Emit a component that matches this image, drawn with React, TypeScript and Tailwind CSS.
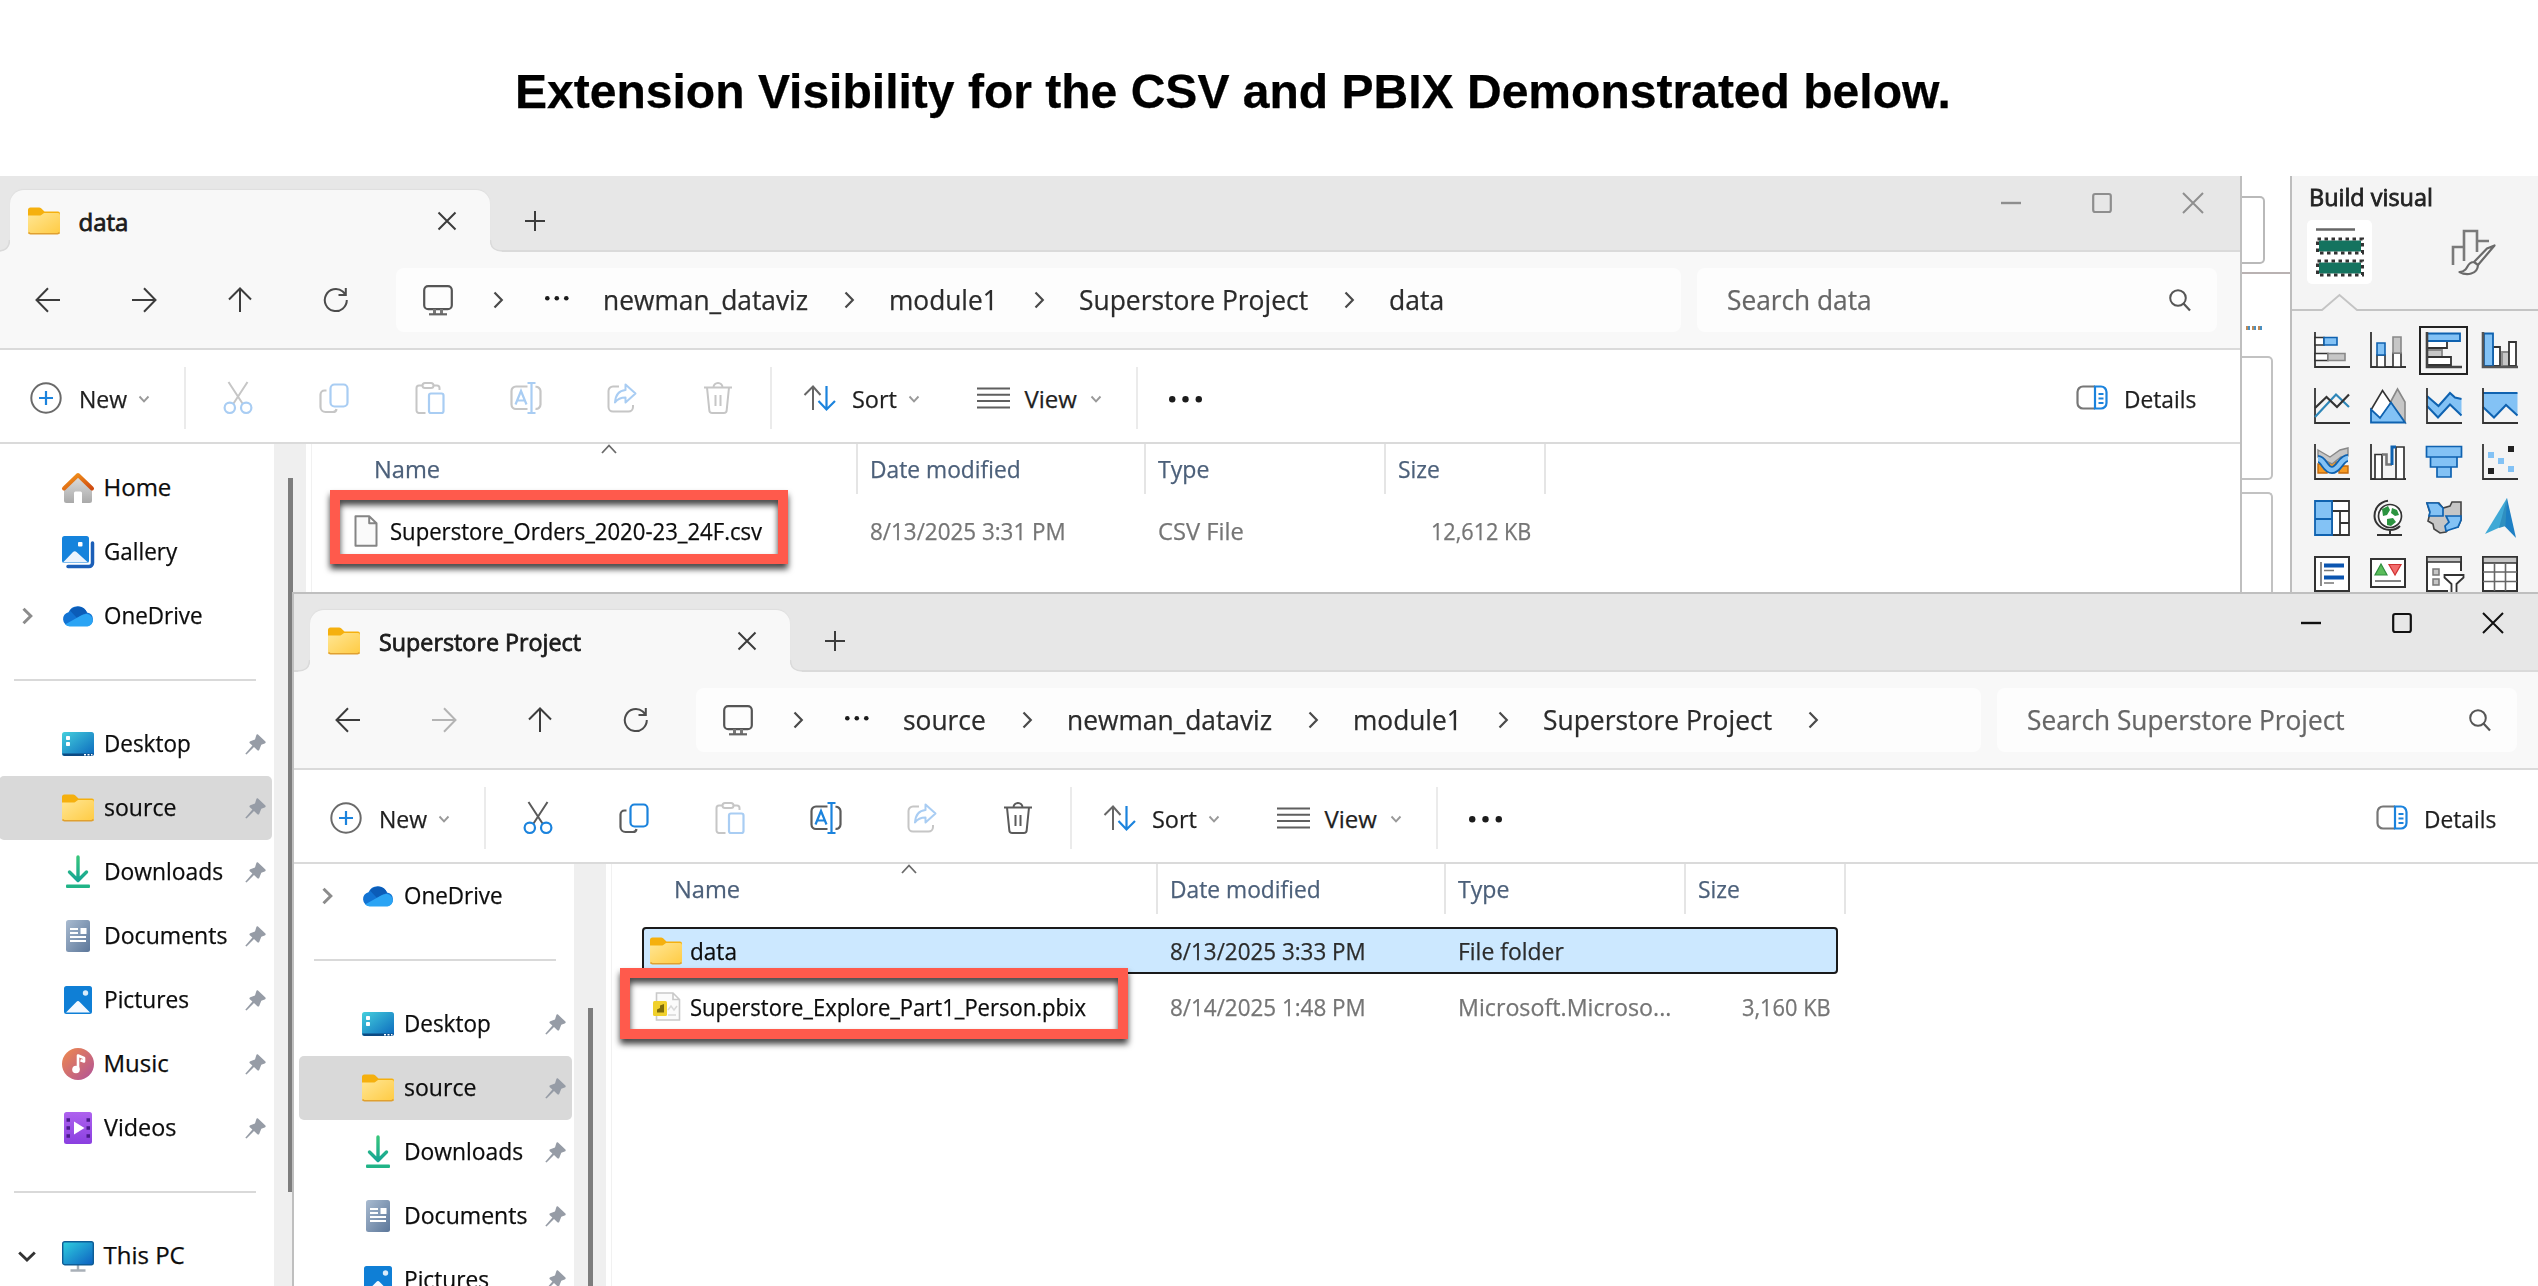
import { useLayoutEffect, useRef, useState } from "react";
import type { ReactNode } from "react";

/* Single line of text set to an exact advance width. */
function Fit({ w, children, className = "" }: { w: number; children: string; className?: string }) {
  const ref = useRef<HTMLSpanElement>(null);
  const [k, setK] = useState(1);
  useLayoutEffect(() => {
    if (ref.current) setK((w + 2) / ref.current.offsetWidth);
  }, [w, children]);
  return (
    <span className={`inline-block shrink-0 whitespace-nowrap ${className}`} style={{ width: w }}>
      <span ref={ref} className="-ml-[1.5px] inline-block origin-left" style={{ transform: `scaleX(${k})` }}>
        {children}
      </span>
    </span>
  );
}

type SvgProps = { w: number; h: number; children: ReactNode; className?: string };
function Svg({ w, h, children, className = "" }: SvgProps) {
  return (
    <svg width={w} height={h} viewBox={`0 0 ${w} ${h}`} fill="none" className={`shrink-0 overflow-visible ${className}`}>
      {children}
    </svg>
  );
}

/* ---------- explorer icons ---------- */

const Folder = () => (
  <Svg w={32} h={28}>
    <defs>
      <linearGradient id="fold" x1="0" y1="0" x2="1" y2="1">
        <stop offset="0" stopColor="#ffe694" />
        <stop offset="1" stopColor="#ffcb43" />
      </linearGradient>
    </defs>
    <path d="M0 10V3a2.5 2.5 0 0 1 2.5-2.5h8.6a3 3 0 0 1 2 .8L16.500 4.500H30a2 2 0 0 1 2 2V12H0Z" fill="#f5b00e" />
    <path d="M0 8.500h11.500a3 3 0 0 0 1.800-.6L16 6h14a2 2 0 0 1 2 2v16.500a2.500 2.500 0 0 1-2.500 2.500h-27A2.500 2.500 0 0 1 0 24.500Z" fill="url(#fold)" />
    <path d="M.5 25.500a2.500 2.500 0 0 0 2 1.200h27a2.500 2.500 0 0 0 2-1.200" stroke="#e0a030" strokeWidth="1.500" />
  </Svg>
);

const HomeIcon = () => (
  <Svg w={32} h={32}>
    <defs>
      <linearGradient id="hm" x1="0" y1="0" x2="0" y2="1">
        <stop offset="0" stopColor="#e2e2e2" />
        <stop offset="1" stopColor="#a9a9a9" />
      </linearGradient>
      <linearGradient id="rf" x1="0" y1="0" x2="1" y2="1">
        <stop offset="0" stopColor="#f59a1d" />
        <stop offset="1" stopColor="#cf4a10" />
      </linearGradient>
    </defs>
    <path d="M2 14 16 2l14 12v14.500a2.500 2.500 0 0 1-2.500 2.500H20v-10a1.500 1.500 0 0 0-1.500-1.500h-5A1.500 1.500 0 0 0 12 21v10H4.500A2.500 2.500 0 0 1 2 28.500Z" fill="url(#hm)" />
    <path d="M2 16.500 16 3l14 13.500" stroke="url(#rf)" strokeWidth="4" strokeLinecap="round" strokeLinejoin="round" />
  </Svg>
);

const GalleryIcon = () => (
  <Svg w={32} h={32}>
    <path d="M6 30.500h21a3.500 3.500 0 0 0 3.500-3.500V7" stroke="#1b5fb8" strokeWidth="3.500" strokeLinecap="round" />
    <rect x="0" y="0" width="27" height="27" rx="2.500" fill="#1583dc" />
    <path d="M1 26.500 11 16a2.500 2.500 0 0 1 3.500 0L26 26.500Z" fill="#eaf3fd" />
    <rect x="16" y="6" width="4.500" height="4.500" rx="1" fill="#fff" />
  </Svg>
);

const CloudIcon = () => (
  <Svg w={32} h={22}>
    <path d="M7.500 21a7 7 0 0 1-1-13.800A10 10 0 0 1 25 7.600a6.800 6.800 0 0 1 .5 13.400Z" fill="#1273d3" />
    <path d="M8 5.500A10 10 0 0 1 25 7.500L15 13Z" fill="#0b5cb8" />
    <path d="M3 19.500 19 10.500a8 8 0 0 1 6-1.500 6.300 6.300 0 0 1 .5 12.500h-18a8 8 0 0 1-4.500-2Z" fill="#2ba4f4" />
  </Svg>
);

const DesktopIcon = () => (
  <Svg w={32} h={24}>
    <defs>
      <linearGradient id="dk" x1="0" y1="0" x2="1" y2="1">
        <stop offset="0" stopColor="#44cfdd" />
        <stop offset="1" stopColor="#0b68bd" />
      </linearGradient>
    </defs>
    <rect width="32" height="24" rx="2.500" fill="url(#dk)" />
    <path d="M.3 21.500h31.400a2.500 2.500 0 0 1-2.200 2.500h-27a2.500 2.500 0 0 1-2.200-2.500Z" fill="#0c4a83" />
    <rect x="4" y="4" width="4" height="4" rx=".8" fill="#fff" />
    <rect x="4" y="10" width="4" height="4" rx=".8" fill="#fff" />
    <path d="M22 22.800h2M25.500 22.800h2M29 22.800h1.500" stroke="#fff" strokeWidth="1.600" />
  </Svg>
);

const DownloadIcon = () => (
  <Svg w={32} h={32}>
    <defs>
      <linearGradient id="dl" gradientUnits="userSpaceOnUse" x1="0" y1="0" x2="0" y2="32">
        <stop offset="0" stopColor="#37c67a" />
        <stop offset="1" stopColor="#0c9c9c" />
      </linearGradient>
    </defs>
    <path d="M16.010 1V24M7.500 16l8.500 8.500 8.500-8.500" stroke="url(#dl)" strokeWidth="3.400" strokeLinecap="round" strokeLinejoin="round" />
    <rect x="4" y="28.500" width="24" height="3.500" rx="1" fill="#20b487" />
  </Svg>
);

const DocumentIcon = () => (
  <Svg w={32} h={32}>
    <defs>
      <linearGradient id="dc" x1="0" y1="0" x2="1" y2="1">
        <stop offset="0" stopColor="#a9bbd0" />
        <stop offset="1" stopColor="#5b7699" />
      </linearGradient>
    </defs>
    <rect x="4" y="0" width="24" height="32" rx="2.500" fill="url(#dc)" />
    <path d="M8 9h8M8 13h8M8 17h16M8 21h16" stroke="#fff" strokeWidth="2" />
    <rect x="18.500" y="8" width="6" height="6" fill="#fff" />
  </Svg>
);

const PictureIcon = () => (
  <Svg w={32} h={28}>
    <rect x="2" y="0" width="28" height="28" rx="2.500" fill="#0f7fd6" />
    <path d="M4 26.500 14.300 16a2.300 2.300 0 0 1 3.400 0L28 26.500Z" fill="#f4f9ff" />
    <circle cx="23.500" cy="7" r="2.700" fill="#d9ecfb" />
  </Svg>
);

const MusicIcon = () => (
  <Svg w={32} h={32}>
    <defs>
      <linearGradient id="mu" x1="0" y1="0" x2="1" y2="1">
        <stop offset="0" stopColor="#f08a4b" />
        <stop offset="1" stopColor="#b0529a" />
      </linearGradient>
    </defs>
    <circle cx="16" cy="16" r="16" fill="url(#mu)" />
    <circle cx="14" cy="21.500" r="3.800" fill="#fff" />
    <path d="M16 22V7.500l6 2.500v3.500l-3.500-1.300" stroke="#fff" strokeWidth="2.600" strokeLinejoin="round" />
  </Svg>
);

const VideoIcon = () => (
  <Svg w={32} h={32}>
    <defs>
      <linearGradient id="vi" x1="0" y1="0" x2="0" y2="1">
        <stop offset="0" stopColor="#ae62ee" />
        <stop offset="1" stopColor="#8a3fe0" />
      </linearGradient>
    </defs>
    <rect x="2" y="0" width="28" height="32" rx="2.500" fill="url(#vi)" />
    <path d="M4.500 8h3.500M4.500 16h3.500M4.500 24h3.500M24.500 8H28M24.500 16H28M24.500 24H28" stroke="#4a1a8c" strokeWidth="3.600" />
    <path d="M12 9.500 22.500 16 12 22.500Z" fill="#fff" />
  </Svg>
);

const PcIcon = () => (
  <Svg w={32} h={31}>
    <defs>
      <linearGradient id="pc" x1="0" y1="0" x2="1" y2="1">
        <stop offset="0" stopColor="#2fd0e0" />
        <stop offset="1" stopColor="#0d5fc0" />
      </linearGradient>
    </defs>
    <path d="M16 24v5M8.500 29.500h15" stroke="#a9b0b8" strokeWidth="2.400" />
    <rect x=".7" y=".7" width="30.600" height="23" rx="2" fill="url(#pc)" stroke="#0e5d96" strokeWidth="1.400" />
  </Svg>
);

const Pin = () => (
  <Svg w={21} h={21}>
    <path d="M13 .6 20.400 7.500c.6.700.3 1.700-.7 2l-3.400 1.200-2 5c-.3.900-1.200 1.100-1.900.5L9 13 1.500 20.500.3 19.800 7.400 11.600 4.800 9.200c-.7-.7-.4-1.600.5-1.900L10 5.400 11.200 1.500C11.500.4 12.300 0 13 .6Z" fill="#969ca6" />
  </Svg>
);

const FileIcon = () => (
  <Svg w={32} h={32}>
    <path d="M5.500 1.200h13.700l7.300 7V30.800H5.500ZM19.200 1.200v7h7.300" stroke="#858585" strokeWidth="2" fill="#fafafa" strokeLinejoin="round" />
  </Svg>
);

const PbixIcon = () => (
  <Svg w={32} h={30}>
    <path d="M6.500 1H23l6.500 6.500V28h-23ZM23 1v6.500h6.500" stroke="#c9c9c9" strokeWidth="1.600" fill="#fbfbfb" />
    <path d="M18 18l3-4 3 4 3-4M18 23h8" stroke="#d8d8d8" strokeWidth="1.500" />
    <rect x="3" y="9" width="14" height="15" rx="1.500" fill="#f0d02c" />
    <path d="M7 20.500v-3l3-1.500v-2.500l4-1.500v8.500Z" fill="#7d6a08" />
  </Svg>
);

const Chevron = ({ color = "#4a4a4a" }: { color?: string }) => (
  <Svg w={12} h={18}>
    <path d="M2.500 1.500 9.800 9l-7.300 7.500" stroke={color} strokeWidth="2.200" />
  </Svg>
);

const NavChevron = () => (
  <Svg w={12} h={18}>
    <path d="M1.500 1.800 8.800 9l-7.300 7.200" stroke="#8c8c8c" strokeWidth="3" />
  </Svg>
);

const Caret = () => (
  <Svg w={12} h={8}>
    <path d="M1.500 1.500 6 6.300l4.500-4.800" stroke="#999" strokeWidth="1.900" />
  </Svg>
);

const Back = ({ color = "#3c3c3c" }: { color?: string }) => (
  <Svg w={26} h={26}>
    <path d="M25 13H1.800M13 1.200 1.500 13 13 24.800" stroke={color} strokeWidth="2" />
  </Svg>
);

const Arrow = ({ color }: { color: string }) => (
  <Svg w={26} h={26}>
    <path d="M1 13h23.200M13 1.200 24.500 13 13 24.800" stroke={color} strokeWidth="2" />
  </Svg>
);

const Up = () => (
  <Svg w={26} h={26}>
    <path d="M13 25V1.800M2 12.500 13 1.500l11 11" stroke="#3c3c3c" strokeWidth="2" />
  </Svg>
);

const Refresh = () => (
  <Svg w={26} h={26}>
    <path d="M23.800 13A11 11 0 1 1 19.800 4.600L22.500 7.500M22.800 1v7H15.500" stroke="#4c4c4c" strokeWidth="2" />
  </Svg>
);

const Monitor = () => (
  <Svg w={30} h={31}>
    <rect x="1.200" y="1.200" width="27.600" height="23" rx="4" stroke="#555" strokeWidth="2.200" />
    <path d="M11.500 24v5M18.500 24v5" stroke="#777" strokeWidth="3" />
    <path d="M6 29.300h18" stroke="#666" strokeWidth="2.200" />
  </Svg>
);

const Magnifier = () => (
  <Svg w={22} h={22}>
    <circle cx="9" cy="9" r="7.800" stroke="#555" strokeWidth="2" />
    <path d="M14.500 14.500 21 21.500" stroke="#555" strokeWidth="2.200" />
  </Svg>
);

type Tone = { on: boolean };
const ink = (on: boolean) => (on ? "#5a5a5a" : "#c6c6c6");
const blue = (on: boolean) => (on ? "#1b83dd" : "#a9cdf3");

const Cut = ({ on }: Tone) => (
  <Svg w={30} h={32}>
    <path d="M5.500 0 19.500 21.500M24.500 0 10.500 21.500" stroke={ink(on)} strokeWidth="2" />
    <circle cx="6.800" cy="25.800" r="5.200" stroke={blue(on)} strokeWidth="2.200" />
    <circle cx="23.200" cy="25.800" r="5.200" stroke={blue(on)} strokeWidth="2.200" />
  </Svg>
);

const Copy = ({ on }: Tone) => (
  <Svg w={30} h={30}>
    <path d="M7.500 7.500H5.500A4 4 0 0 0 1.500 11.500V24a5 5 0 0 0 5 5H14a3.500 3.500 0 0 0 3.500-3" stroke={ink(on)} strokeWidth="2.200" />
    <rect x="11.500" y="1.500" width="17" height="22" rx="4" stroke={blue(on)} strokeWidth="2.200" />
  </Svg>
);

const Paste = ({ on }: Tone) => (
  <Svg w={30} h={32}>
    <path d="M8 3.500H4A2.500 2.500 0 0 0 1.500 6v22.500A2.500 2.500 0 0 0 4 31h6.500M18 3.500h4A2.500 2.500 0 0 1 24.500 6v2" stroke={ink(on)} strokeWidth="2" />
    <rect x="7.500" y="1" width="11" height="5" rx="2.500" stroke={ink(on)} strokeWidth="2" />
    <rect x="14" y="11.500" width="14.500" height="19.500" rx="2" stroke={blue(on)} strokeWidth="2.200" />
  </Svg>
);

const Rename = ({ on }: Tone) => (
  <Svg w={32} h={32}>
    <path d="M17.500 4.500H6A4.500 4.500 0 0 0 1.500 9v13.500A4.500 4.500 0 0 0 6 27h11.500M25.500 4.800A4.500 4.500 0 0 1 30.500 9v13.500a4.500 4.500 0 0 1-5 4.400" stroke={ink(on)} strokeWidth="2.200" />
    <path d="M5.500 22.500 11 9l5.500 13.500M7.500 18.500h7M21.500 1v30M17.500 1h8M17.500 31h8" stroke={blue(on)} strokeWidth="2.200" />
  </Svg>
);

const Share = ({ on }: Tone) => (
  <Svg w={30} h={30}>
    <path d="M12 3.500H6A4.500 4.500 0 0 0 1.500 8v16A4.500 4.500 0 0 0 6 28.500h15.500A4.500 4.500 0 0 0 26 24v-2" stroke={ink(on)} strokeWidth="2" />
    <path d="M18.500 1.500 28.500 10.500l-10 9V14.500c-5 0-8 1.500-10.500 5 .5-7 4-12 10.500-12.500Z" stroke={blue(on)} strokeWidth="2" strokeLinejoin="round" />
  </Svg>
);

const Trash = ({ on }: Tone) => (
  <Svg w={30} h={32}>
    <path d="M1 5.500h28M10.500 5.500a4.500 4.500 0 0 1 9 0M4 5.500l2.300 22.700A3 3 0 0 0 9.300 31h11.400a3 3 0 0 0 3-2.800L26 5.500M12.500 13v11M17.500 13v11" stroke={ink(on)} strokeWidth="2" />
  </Svg>
);

const NewIcon = () => (
  <Svg w={32} h={32}>
    <circle cx="16" cy="16" r="14.700" stroke="#6a6a6a" strokeWidth="2" />
    <path d="M16 9v14M9 16h14" stroke="#1b83dd" strokeWidth="2.200" />
  </Svg>
);

const SortIcon = () => (
  <Svg w={34} h={26}>
    <path d="M10 25V1.500M1.500 10 10 1.500l7.500 8.500" stroke="#666" strokeWidth="2" />
    <path d="M23.500 1v23.500M15.500 16l8 8.500 8.500-8.500" stroke="#1b83dd" strokeWidth="2.200" />
  </Svg>
);

const ViewIcon = () => (
  <Svg w={33} h={22}>
    <path d="M0 1.500h33M0 7.700h33M0 14h33M0 20.500h33" stroke="#5f5f5f" strokeWidth="2" />
  </Svg>
);

const DetailsIcon = () => (
  <Svg w={32} h={25}>
    <path d="M19 1.500H7A5.500 5.500 0 0 0 1.500 7v11A5.500 5.500 0 0 0 7 23.500h12" stroke="#777" strokeWidth="2.200" />
    <path d="M19 1.500h6A5.500 5.500 0 0 1 30.500 7v11a5.500 5.500 0 0 1-5.500 5.500h-6ZM22.500 9h5M22.500 13.500h5M22.500 18h5" stroke="#1b83dd" strokeWidth="2.200" />
  </Svg>
);

const Dots = ({ r, gap }: { r: number; gap: number }) => (
  <Svg w={gap * 2 + r * 2} h={r * 2}>
    <circle cx={r} cy={r} r={r} fill="#1c1c1c" />
    <circle cx={r + gap} cy={r} r={r} fill="#1c1c1c" />
    <circle cx={r + gap * 2} cy={r} r={r} fill="#1c1c1c" />
  </Svg>
);

/* ---------- navigation pane ---------- */

type NavItem = { label: string; w: number; icon: ReactNode; pin?: boolean; active?: boolean; chevron?: "right" | "down" } | null;

const oneDrive: NavItem = { label: "OneDrive", w: 97, icon: <CloudIcon />, chevron: "right" };
const pinned: NavItem[] = [
  { label: "Desktop", w: 85, icon: <DesktopIcon />, pin: true },
  { label: "source", w: 70, icon: <Folder />, pin: true, active: true },
  { label: "Downloads", w: 117, icon: <DownloadIcon />, pin: true },
  { label: "Documents", w: 121, icon: <DocumentIcon />, pin: true },
  { label: "Pictures", w: 83, icon: <PictureIcon />, pin: true },
  { label: "Music", w: 63, icon: <MusicIcon />, pin: true },
  { label: "Videos", w: 70, icon: <VideoIcon />, pin: true },
];

const fullNav: NavItem[] = [
  { label: "Home", w: 66, icon: <HomeIcon /> },
  { label: "Gallery", w: 71, icon: <GalleryIcon /> },
  oneDrive,
  null,
  ...pinned,
  null,
  { label: "This PC", w: 79, icon: <PcIcon />, chevron: "down" },
];

const scrolledNav: NavItem[] = [oneDrive, null, ...pinned.slice(0, 5)];

function NavPane({ items, className }: { items: NavItem[]; className: string }) {
  return (
    <nav className={`w-[280px] shrink-0 ${className}`}>
      {items.map((it, i) =>
        it === null ? (
          <div key={i} className="flex h-16 items-center pl-5">
            <div className="h-[2px] w-[242px] bg-[#d9d9d9]" />
          </div>
        ) : (
          <div key={i} className={`ml-[5px] flex h-16 w-[273px] items-center rounded-[5px] pr-[6px] ${it.active ? "bg-[#d9d9d9]" : ""}`}>
            <div className="mr-[5px] flex w-[58px] shrink-0 justify-center">
              {it.chevron === "right" && <NavChevron />}
              {it.chevron === "down" && (
                <Svg w={18} h={11} className="-ml-[2px]">
                  <path d="M1.200 1.500 9 9l7.800-7.500" stroke="#333" strokeWidth="2.900" />
                </Svg>
              )}
            </div>
            {it.icon}
            <Fit w={it.w} className="-mt-[2px] ml-[11px] text-[24px] text-[#0c0c0c]">{it.label}</Fit>
            {it.pin && <div className="ml-auto"><Pin /></div>}
          </div>
        ),
      )}
    </nav>
  );
}

/* ---------- explorer window ---------- */

type Crumb = [string, number];
type FileRow = {
  name: Crumb;
  icon: ReactNode;
  date: string;
  type: Crumb;
  size?: Crumb;
  selected?: boolean;
};

type WindowProps = {
  title: Crumb;
  crumbs: Crumb[];
  trailing?: boolean;
  search: Crumb;
  focused: boolean;
  nav: NavItem[];
  navClass: string;
  thumbClass: string;
  rows: FileRow[];
  className: string;
};

const Sep = ({ className }: { className: string }) => <div className={`h-[62px] w-[2px] shrink-0 bg-[#ebebeb] ${className}`} />;

function ExplorerWindow({ title, crumbs, trailing, search, focused, nav, navClass, thumbClass, rows, className }: WindowProps) {
  const ctl = focused ? "#111" : "#8e8e8e";
  return (
    <section className={`absolute flex w-[2246px] flex-col bg-white shadow-[0_0_0_2px_#bfbfbf] ${className}`}>
      <div className="flex h-[78px] shrink-0 items-end border-b-2 border-[#dadada] bg-[#e7e7e7]">
        <div className="relative -mb-[2px] ml-4 flex h-[62px] w-[480px] items-center rounded-t-[14px] bg-[#f8f8f8] pr-[34px] pl-[18px] shadow-[0_-1px_1px_#dedede]">
          <svg width="12" height="12" className="absolute bottom-0 -left-3" viewBox="0 0 12 12">
            <path d="M0 12H12V0Q12 11 0 11Z" fill="#f8f8f8" />
            <path d="M0 11Q11.500 11 11.500 0" fill="none" stroke="#dadada" strokeWidth="1.500" />
          </svg>
          <svg width="12" height="12" className="absolute -right-3 bottom-0" viewBox="0 0 12 12">
            <path d="M12 12H0V0Q0 11 12 11Z" fill="#f8f8f8" />
            <path d="M12 11Q.5 11 .5 0" fill="none" stroke="#dadada" strokeWidth="1.500" />
          </svg>
          <Folder />
          <Fit w={title[1]} className="mt-[2px] ml-5 text-[24px] text-[#1b1b1b] [-webkit-text-stroke:0.8px]">{title[0]}</Fit>
          <div className="ml-auto">
            <Svg w={18} h={18}>
              <path d="M.5.500 17.500 17.500M17.500.500.500 17.500" stroke="#3c3c3c" strokeWidth="2" />
            </Svg>
          </div>
        </div>
        <div className="ml-[35px] flex h-[60px] items-center pt-[2px]">
          <Svg w={20} h={20}>
            <path d="M10 0v20M0 10h20" stroke="#3c3c3c" strokeWidth="2" />
          </Svg>
        </div>
        <div className="mr-[2px] ml-auto flex h-full pb-[19px]">
          <div className="flex w-[91px] items-center justify-center">
            <Svg w={20} h={20}><path d="M0 10h20" stroke={ctl} strokeWidth="2.400" /></Svg>
          </div>
          <div className="flex w-[91px] items-center justify-center">
            <Svg w={20} h={20}><rect x="1.200" y="1" width="17.600" height="18" rx="2" stroke={ctl} strokeWidth="2.200" /></Svg>
          </div>
          <div className="flex w-[91px] items-center justify-center">
            <Svg w={20} h={20}><path d="M0 0 20 20M20 0 0 20" stroke={ctl} strokeWidth="2" /></Svg>
          </div>
        </div>
      </div>

      <div className="flex h-[98px] shrink-0 items-center border-b-2 border-[#dadada] bg-[#f8f8f8] pl-[6px]">
        <div className="flex w-24 justify-center"><Back /></div>
        <div className="flex w-24 justify-center"><Arrow color={focused ? "#b4b4b4" : "#3c3c3c"} /></div>
        <div className="flex w-24 justify-center"><Up /></div>
        <div className="flex w-24 justify-center"><Refresh /></div>
        <div className="ml-3 flex h-16 w-[1285px] items-center rounded-lg bg-[#fdfdfd] pl-[27px]">
          <Monitor />
          <div className="ml-[39px]"><Chevron /></div>
          <div className="mt-[-3px] mr-[36px] ml-[41px]"><Dots r={2.3} gap={9.500} /></div>
          {crumbs.map(([t, w], i) => (
            <div key={t} className="flex items-center">
              <Fit w={w} className="mt-[1px] text-[27px] text-[#2b2b2b]">{t}</Fit>
              {(i < crumbs.length - 1 || trailing) && (
                <div className="flex w-[83px] justify-center"><Chevron /></div>
              )}
            </div>
          ))}
        </div>
        <div className="ml-4 flex h-16 w-[520px] items-center justify-between rounded-lg bg-[#fdfdfd] pr-[26px] pl-[31px]">
          <Fit w={search[1]} className="mt-[1px] text-[27px] text-[#666]">{search[0]}</Fit>
          <Magnifier />
        </div>
      </div>

      <div className="flex h-[94px] shrink-0 items-center border-b-2 border-[#dadada] pt-[3px] pr-[45px] pl-[36px] text-[24px] text-[#1f1f1f]">
        <NewIcon />
        <Fit w={46} className="mt-[2px] ml-[18px]">New</Fit>
        <div className="mt-[2px] ml-3"><Caret /></div>
        <Sep className="ml-[34px]" />
        <div className="ml-1 flex w-24 justify-center"><Cut on={focused} /></div>
        <div className="flex w-24 justify-center"><Copy on={focused} /></div>
        <div className="flex w-24 justify-center"><Paste on={false} /></div>
        <div className="flex w-24 justify-center"><Rename on={focused} /></div>
        <div className="flex w-24 justify-center"><Share on={false} /></div>
        <div className="flex w-24 justify-center"><Trash on={focused} /></div>
        <Sep className="ml-[4px]" />
        <div className="ml-[31px]"><SortIcon /></div>
        <Fit w={43} className="mt-[2px] ml-[16px]">Sort</Fit>
        <div className="mt-[2px] ml-3"><Caret /></div>
        <div className="ml-[57px]"><ViewIcon /></div>
        <Fit w={50} className="mt-[2px] ml-4">View</Fit>
        <div className="mt-[2px] ml-[14px]"><Caret /></div>
        <Sep className="ml-[34px]" />
        <div className="mt-1 ml-[31px]"><Dots r={3.2} gap={13.300} /></div>
        <div className="ml-auto"><DetailsIcon /></div>
        <Fit w={70} className="mt-[2px] ml-[17px]">Details</Fit>
      </div>

      <div className="flex min-h-0 flex-1 overflow-hidden">
        <NavPane items={nav} className={navClass} />
        <div className="w-8 shrink-0 bg-[#efefef] pl-[14px]">
          <div className={`w-[5px] bg-[#7d7d7d] ${thumbClass}`} />
        </div>
        <div className="ml-[5px] w-[1px] shrink-0 bg-[#f1f1f1]" />
        <div className="min-w-0 flex-1 text-[24px]">
          <div className="relative flex h-[50px] items-center text-[#4c607a]">
            <div className="flex h-full w-[546px] items-center border-r-2 border-[#e5e5e5] pl-[63px]"><Fit w={64}>Name</Fit></div>
            <div className="flex h-full w-[288px] items-center border-r-2 border-[#e5e5e5] pl-[13px]"><Fit w={149}>Date modified</Fit></div>
            <div className="flex h-full w-[240px] items-center border-r-2 border-[#e5e5e5] pl-[13px]"><Fit w={49}>Type</Fit></div>
            <div className="flex h-full w-[160px] items-center border-r-2 border-[#e5e5e5] pl-[13px]"><Fit w={40}>Size</Fit></div>
            <svg width="16" height="10" viewBox="0 0 16 10" className="absolute top-0 left-[289px]">
              <path d="M1 9 8 1.500 15 9" fill="none" stroke="#6a6a6a" strokeWidth="1.800" />
            </svg>
          </div>
          <div className="mt-[13px] ml-[30px] flex w-[1196px] flex-col gap-[9px]">
            {rows.map((r) => (
              <div
                key={r.name[0]}
                className={`flex h-[47px] items-center rounded-[4px] border-2 ${r.selected ? "border-[#1a1a1a] bg-[#cce8ff] text-[#2c2c2c]" : "border-transparent text-[#757575]"}`}
              >
                <div className="flex w-[527px] items-center pl-[6px]">
                  {r.icon}
                  <Fit w={r.name[1]} className="ml-[9px] text-[#0c0c0c]">{r.name[0]}</Fit>
                </div>
                <div className="w-[288px]"><Fit w={194}>{r.date}</Fit></div>
                <div className="w-[240px]"><Fit w={r.type[1]}>{r.type[0]}</Fit></div>
                <div className="flex flex-1 justify-end pr-[6px]">{r.size && <Fit w={r.size[1]}>{r.size[0]}</Fit>}</div>
              </div>
            ))}
          </div>
        </div>
      </div>
    </section>
  );
}

/* ---------- visual picker ---------- */

const D = "#333333";
const B = "#83c2f5";
const S = "#0f62b0";
const G = "#c6c6c6";
const Axis = () => <path d="M1 0V35H36" stroke={D} strokeWidth="1.800" />;

const visuals: ReactNode[] = [
  <>
    <Axis />
    <g strokeWidth="1.600">
      <path d="M1 5.500H10V13H1Z" fill="#fff" stroke={D} />
      <path d="M10 5.500H23V13H10Z" fill={B} stroke={S} />
      <path d="M1 21.500H14V28.500H1Z" fill="#fff" stroke={D} />
      <path d="M14 21.500H31V28.500H14Z" fill={G} stroke="#888" />
    </g>
  </>,
  <>
    <Axis />
    <g strokeWidth="1.600">
      <path d="M7 23H15V35H7Z" fill="#fff" stroke={D} />
      <path d="M7 11H15V23H7Z" fill={B} stroke={S} />
      <path d="M23 21H31V35H23Z" fill="#fff" stroke={D} />
      <path d="M23 5H31V21H23Z" fill={G} stroke="#888" />
    </g>
  </>,
  <>
    <rect x="-6" y="-5" width="47" height="47" stroke="#222" strokeWidth="2" />
    <g strokeWidth="1.800">
      <path d="M1 9H21V16H1Z" fill="#fff" stroke={D} />
      <path d="M1 18H16V25H1Z" fill={G} stroke="#888" />
      <path d="M1 25H25V33H1Z" fill="#fff" stroke={D} />
      <path d="M1 1.500H34V9H1Z" fill={B} stroke={S} />
    </g>
    <path d="M1 0V35H36" stroke="#444" strokeWidth="2.600" />
  </>,
  <>
    <g strokeWidth="1.800">
      <path d="M11 15H18V34H11Z" fill="#fff" stroke={D} />
      <path d="M20 20H27V34H20Z" fill={G} stroke="#888" />
      <path d="M27 10H34V34H27Z" fill="#fff" stroke={D} />
      <path d="M2 1.500H11V34H2Z" fill={B} stroke={S} />
    </g>
    <path d="M1 0V35H36" stroke="#555" strokeWidth="2.600" />
  </>,
  <>
    <Axis />
    <path d="M1 29 22 6.500 35 19" stroke="#2d86b8" strokeWidth="2.200" />
    <path d="M1 20 12.500 9 23 19 35 6.500" stroke={D} strokeWidth="2.200" />
  </>,
  <>
    <path d="M20 15 27.500 1 35 14V34L21 15Z" fill={G} stroke="#888" strokeWidth="1.600" />
    <path d="M1 22 12.500 2.500 21 15 10 31Z" fill="#fff" stroke={D} strokeWidth="1.600" />
    <path d="M1 21.500 10 30 21 14.500 35 34.500H1Z" fill={B} stroke={S} strokeWidth="1.800" />
  </>,
  <>
    <path d="M1 8 12.500 18 24 5 29 9.500 35.500 11V27.500L24 16.500 12 29.500 1 18Z" fill={B} />
    <path d="M1 8 12.500 18 24 5 29 9.500 35.500 11M1 18 12 29.500 24 16.500 35.500 27.500" stroke={S} strokeWidth="2" />
    <Axis />
  </>,
  <>
    <path d="M1 5H35.500V27.500L24 17 12 29.500 1 19Z" fill={B} />
    <path d="M1 5H35.500M1 19 12 29.500 24 17 35.500 27.500" stroke={S} strokeWidth="2" />
    <Axis />
  </>,
  <>
    <path d="M4 20h9v9H4ZM15 17h7v6h-7ZM25 22h9v7h-9Z" fill="#f59a23" stroke="#c46a0c" strokeWidth="1.400" />
    <path d="M4 6 16 13 26 6 34 4V12L27 13 18 20 4 13Z" fill={G} stroke="#888" strokeWidth="1.400" />
    <path d="M4 15C10 15 11 26 18 26S27 14 34 14" stroke={S} strokeWidth="8" />
    <path d="M4 15C10 15 11 26 18 26S27 14 34 14" stroke={B} strokeWidth="4.500" />
    <Axis />
  </>,
  <>
    <Axis />
    <g strokeWidth="1.700">
      <path d="M5 10.500H12V35H5Z" fill="#fff" stroke={D} />
      <path d="M12 10.500H16.500V20.500H22" stroke="#777" strokeWidth="2.600" />
      <path d="M26 3H34V35H26Z" fill="#fff" stroke={D} />
    </g>
    <path d="M22 21V3H26" stroke={S} strokeWidth="3" />
  </>,
  <g fill={B} stroke={S} strokeWidth="1.700">
    <path d="M.5 2.500H35.500V13H.500ZM4.500 13H31V23H4.500ZM11 23H25V33H11Z" />
  </g>,
  <>
    <Axis />
    <path d="M26 2h6v6h-6ZM6 24h6v6H6Z" fill="#222" />
    <path d="M6 8h6v6H6ZM16 14h6v6h-6ZM26 22h6v6h-6Z" fill={B} />
  </>,
  <>
    <path d="M18 1H35V35H18Z" fill="#fff" stroke={D} strokeWidth="1.800" />
    <path d="M18 11H35M26 11V35M26 23H35" stroke={D} strokeWidth="1.800" />
    <path d="M1 1H18V35H1ZM1 19H18" fill={B} stroke={S} strokeWidth="1.800" />
  </>,
  <>
    <circle cx="20" cy="16" r="11.500" fill="#fff" stroke={D} strokeWidth="1.700" />
    <path d="M12 9l6-3 2 4-3 5-4 1ZM22 8l5 2 2 5-4 1-4-3ZM17 19l6-1 3 4-5 4-4-1Z" fill="#2c9440" />
    <path d="M18 .8C9 2 4.500 9 4.500 16S11 30 20 30c4 0 7-1 10-4M20 30v4M7 35h25" stroke={D} strokeWidth="2" />
  </>,
  <>
    <path d="M1 3H13L17 8 24 6 26 2H35V20L32 27 24 28 20 32 14 33 8 29 7 24 2 21 4 13Z" fill={G} stroke="#444" strokeWidth="1.600" />
    <path d="M1 3H12L17 8V16H3L4 12ZM20 16H35V20L32 27 26 29 20 31 19 26 23 22Z" fill={B} stroke={S} strokeWidth="1.700" />
  </>,
  <>
    <path d="M25-2 3 34 23 25Z" fill="#3fa9d6" />
    <path d="M25-2 34 38 22 25.500Z" fill="#1d7fc4" />
    <path d="M25-2 23.500 26 17 28Z" fill="#2f8fc0" />
  </>,
  <>
    <path d="M1 1H35V35H1Z" fill="#fff" stroke={D} strokeWidth="2" />
    <path d="M7 6V30M10 14.500H20M10 27H20" stroke="#777" strokeWidth="1.700" />
    <path d="M10 9.500H30M10 21.500H30" stroke="#0b55b0" strokeWidth="4" />
  </>,
  <>
    <path d="M1 3H35V31H1Z" fill="#fff" stroke={D} strokeWidth="2" />
    <path d="M11 8 17 19H5Z" fill="#5bbd5b" stroke="#2f8f3f" strokeWidth="1.200" />
    <path d="M25 19 19 8.500H31Z" fill="#f26d6d" stroke="#d03030" strokeWidth="1.200" />
    <path d="M5 25H31" stroke="#777" strokeWidth="1.800" />
  </>,
  <>
    <path d="M35 15V1H1V35H22" fill="#fff" stroke={D} strokeWidth="2" />
    <path d="M1 1H35V6H1Z" fill={G} stroke={D} strokeWidth="1.600" />
    <path d="M7 13H13V19H7ZM7 23H13V29H7Z" fill={G} stroke="#777" strokeWidth="1.500" />
    <path d="M18.500 19H37.500V21.500L30.500 28V37H25.500V28L18.500 21.500Z" fill="#fff" stroke={D} strokeWidth="1.800" />
  </>,
  <>
    <path d="M1 1H35V35H1Z" fill="#fff" stroke={D} strokeWidth="2" />
    <path d="M1 1H35V7H1Z" fill={G} stroke={D} strokeWidth="1.600" />
    <path d="M12.500 7V35M23.500 7V35M1 16H35M1 25.500H35" stroke="#666" strokeWidth="1.600" />
  </>,
];

function VisualPane() {
  return (
    <div className="absolute top-0 right-0 flex h-[418px] w-[298px]">
      <div className="flex w-[50px] shrink-0 flex-col bg-white">
        <div className="mt-[20px] h-[68px] w-[25px] shrink-0 rounded-r-[5px] border-2 border-l-0 border-[#b9b9b9]" />
        <div className="mt-[8px] h-[2px] shrink-0 bg-[#b9b2b2]" />
        <div className="mt-[52px] ml-[6px] flex shrink-0 gap-[2px]">
          {[0, 1, 2].map((n) => (
            <span key={n} className="h-1 w-1 bg-linear-to-r from-[#c08a55] from-50% to-[#4a8fc0] to-50%" />
          ))}
        </div>
        <div className="mt-[26px] h-[124px] w-[33px] shrink-0 rounded-r-[5px] border-2 border-l-0 border-[#c2c2c2]" />
        <div className="mt-[12px] w-[33px] flex-1 rounded-tr-[5px] border-2 border-b-0 border-l-0 border-[#c2c2c2]" />
      </div>
      <div className="flex flex-1 flex-col overflow-hidden border-l-2 border-[#bdbdbd] bg-[#f4f4f4]">
        <Fit w={122} className="mt-[3px] ml-[18px] h-9 text-[24px] leading-9 text-[#222] [-webkit-text-stroke:0.8px]">Build visual</Fit>
        <div className="mt-[5px] flex pl-[15px]">
          <div className="flex h-16 w-[65px] items-center justify-center rounded-[5px] bg-white">
            <Svg w={48} h={50}>
              <path d="M0 2.500H39" stroke="#666" strokeWidth="2.600" />
              <path d="M1.500 12H46.500V26H1.500ZM1.500 34H46.500V48H1.500Z" fill="#14735f" stroke="#fff" strokeWidth="3" />
              <path d="M1.500 12H46.500V26H1.500ZM1.500 34H46.500V48H1.500Z" stroke="#333" strokeWidth="3" strokeDasharray="3.500 3.500" />
            </Svg>
          </div>
          <Svg w={46} h={48} className="mt-2 ml-[79px]">
            <path d="M2 37V19H13V33M13 19V3H26V24M26 13H38" stroke="#7a7a7a" strokeWidth="2.600" />
            <path d="M43.500 17.500 27 37 23 34 36 20.500ZM23 34c-6 0-6 5-8.500 7.500-1.500 1.500-4 2.500-6 2.500 7 4 18 2.500 18.500-7" stroke="#6a6a6a" strokeWidth="2.200" strokeLinejoin="round" />
          </Svg>
        </div>
        <svg width="246" height="18" viewBox="0 0 246 18" fill="none" className="mt-[9px] shrink-0">
          <path d="M0 17H30L47.500 2 65 17H246" stroke="#c4c4c4" strokeWidth="1.800" />
        </svg>
        <div className="mt-[21px] ml-[22px] grid w-[280px] grid-cols-[repeat(5,36px)] gap-5">
          {visuals.map((v, i) => (
            <div key={i} className={i % 4 === 0 ? "col-start-1" : ""}>
              <Svg w={36} h={36}>{v}</Svg>
            </div>
          ))}
        </div>
      </div>
    </div>
  );
}

export default function App() {
  return (
    <div className="flex h-[1286px] w-[2538px] flex-col overflow-hidden bg-white font-['Open_Sans',sans-serif] [-webkit-text-stroke:0.25px]">
      <header className="flex h-[176px] shrink-0 items-center pb-[1px] pl-[516px]">
        <Fit w={1434} className="mt-[8px] font-['Liberation_Sans',Arial,sans-serif] text-[48px] font-bold text-black">
          Extension Visibility for the CSV and PBIX Demonstrated below.
        </Fit>
      </header>

      <main className="relative h-[1110px] shrink-0 overflow-hidden">
        <VisualPane />

        <ExplorerWindow
          className="-top-[2px] -left-[6px] h-[1200px]"
          title={["data", 48]}
          crumbs={[["newman_dataviz", 203], ["module1", 107], ["Superstore Project", 227], ["data", 53]]}
          search={["Search data", 143]}
          focused={false}
          nav={fullNav}
          navClass="mt-3"
          thumbClass="mt-[34px] h-[714px]"
          rows={[{ name: ["Superstore_Orders_2020-23_24F.csv", 370], icon: <FileIcon />, date: "8/13/2025 3:31 PM", type: ["CSV File", 84], size: ["12,612 KB", 98] }]}
        />
        <div className="absolute top-[314px] left-[330px] h-[74px] w-[458px] border-[10px] border-[#ff5a4c] drop-shadow-[0_5px_3px_rgba(0,0,0,0.75)]" />

        <ExplorerWindow
          className="top-[418px] left-[294px] h-[800px]"
          title={["Superstore Project", 200]}
          crumbs={[["source", 81], ["newman_dataviz", 203], ["module1", 107], ["Superstore Project", 227]]}
          trailing
          search={["Search Superstore Project", 316]}
          focused
          nav={scrolledNav}
          navClass=""
          thumbClass="mt-[144px] h-[400px]"
          rows={[
            { name: ["data", 45], icon: <Folder />, date: "8/13/2025 3:33 PM", type: ["File folder", 104], selected: true },
            { name: ["Superstore_Explore_Part1_Person.pbix", 394], icon: <PbixIcon />, date: "8/14/2025 1:48 PM", type: ["Microsoft.Microso...", 211], size: ["3,160 KB", 87] },
          ]}
        />
        <div className="absolute top-[792px] left-[620px] h-[71px] w-[508px] border-[10px] border-[#ff5a4c] drop-shadow-[0_5px_3px_rgba(0,0,0,0.75)]" />
      </main>
    </div>
  );
}
